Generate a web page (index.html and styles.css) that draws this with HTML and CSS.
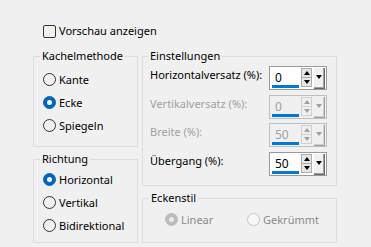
FILE: index.html
```html
<!DOCTYPE html>
<html lang="de">

<head>
    <meta charset="UTF-8">
    <title>Nahtloses Kacheln</title>
    <link rel="stylesheet" href="styles.css">
</head>

<body>
    <div class="dialog">
        <label class="check"><span class="box"></span>Vorschau anzeigen</label>

        <div class="columns">
            <div class="col">
                <fieldset class="group method">
                    <legend>Kachelmethode</legend>
                    <div class="radio"><span class="dot"></span>Kante</div>
                    <div class="radio"><span class="dot on"></span>Ecke</div>
                    <div class="radio"><span class="dot"></span>Spiegeln</div>
                </fieldset>

                <fieldset class="group direction">
                    <legend>Richtung</legend>
                    <div class="radio"><span class="dot on"></span>Horizontal</div>
                    <div class="radio"><span class="dot"></span>Vertikal</div>
                    <div class="radio"><span class="dot"></span>Bidirektional</div>
                </fieldset>
            </div>

            <div class="col">
                <fieldset class="group settings">
                    <legend>Einstellungen</legend>
                    <div class="rows">
                        <div class="row">
                            <span class="label">Horizontalversatz (%):</span>
                            <div class="spin">
                                <div class="field"><span class="value">0</span><span class="bar"></span></div>
                                <div class="arrows"><span class="up"></span><span class="down"></span></div>
                                <div class="drop"></div>
                            </div>
                        </div>
                        <div class="row off">
                            <span class="label">Vertikalversatz (%):</span>
                            <div class="spin">
                                <div class="field"><span class="value">0</span><span class="bar"></span></div>
                                <div class="arrows"><span class="up"></span><span class="down"></span></div>
                                <div class="drop"></div>
                            </div>
                        </div>
                        <div class="row off">
                            <span class="label">Breite (%):</span>
                            <div class="spin">
                                <div class="field"><span class="value">50</span><span class="bar"></span></div>
                                <div class="arrows"><span class="up"></span><span class="down"></span></div>
                                <div class="drop"></div>
                            </div>
                        </div>
                        <div class="row">
                            <span class="label">Übergang (%):</span>
                            <div class="spin">
                                <div class="field"><span class="value">50</span><span class="bar"></span></div>
                                <div class="arrows"><span class="up"></span><span class="down"></span></div>
                                <div class="drop"></div>
                            </div>
                        </div>
                    </div>
                </fieldset>

                <fieldset class="group corner">
                    <legend>Eckenstil</legend>
                    <div class="pair">
                        <div class="radio off"><span class="dot on"></span>Linear</div>
                        <div class="radio off"><span class="dot"></span>Gekrümmt</div>
                    </div>
                </fieldset>
            </div>
        </div>
    </div>
</body>

</html>
```

FILE: styles.css
```css
:root {
    --face: #f0f0f0;
    --group-border: #dcdcdc;
    --text: #000;
    --text-off: #a0a0a0;
    --accent: #0067c0;
    --bar: #0078d7;
}

html,
body {
    margin: 0;
    padding: 0;
    background: var(--face);
}

body {
    font-family: "Noto Sans", "Open Sans", sans-serif;
    font-size: 11px;
    line-height: 16px;
    color: var(--text);
}

.dialog {
    padding: 23px 0 0 33px;
}

.check {
    display: flex;
    align-items: center;
    height: 16px;
    padding-left: 10px;
}

.box {
    width: 13px;
    height: 13px;
    box-sizing: border-box;
    border: 1px solid #333;
    border-radius: 2px;
    margin-right: 3px;
}

.columns {
    display: flex;
    gap: 4px;
    margin-top: 9px;
}

.col {
    display: flex;
    flex-direction: column;
    gap: 4px;
}

/* group boxes */

.group {
    margin: 0;
    padding: 0;
    border: 1px solid var(--group-border);
    box-sizing: border-box;
    min-width: 0;
}

.group legend {
    padding: 0 2px;
    margin-left: 6px;
    line-height: 16px;
}

.method,
.direction {
    width: 105px;
}

.method {
    height: 99px;
    padding-top: 4px;
}

.direction {
    height: 92px;
    padding-top: 1px;
}

.settings,
.corner {
    width: 195px;
}

.settings {
    height: 138px;
}

.settings legend {
    margin-left: 5px;
}

.rows {
    padding: 2px 9px 0 7px;
}

.corner {
    height: 53px;
}

/* radios */

.radio {
    display: flex;
    align-items: center;
    height: 23px;
    padding-left: 9px;
    white-space: nowrap;
}

.dot {
    flex: none;
    width: 13px;
    height: 13px;
    box-sizing: border-box;
    border: 1px solid #333;
    border-radius: 50%;
    margin-right: 3px;
    display: flex;
    align-items: center;
    justify-content: center;
}

.dot.on {
    background: var(--accent);
    border-color: var(--accent);
}

.dot.on::after {
    content: "";
    width: 5px;
    height: 5px;
    border-radius: 50%;
    background: #fff;
}

.pair {
    display: flex;
    padding: 2px 0 0 22px;
}

.pair .radio {
    padding-left: 0;
    width: 82px;
    color: #8a8a8a;
}

.radio.off .dot {
    border-color: #c4c4c4;
    background: #f7f7f7;
}

.radio.off .dot.on {
    background: #bcbcbc;
    border-color: #bcbcbc;
}

.radio.off .dot.on::after {
    background: #ececec;
}

/* spin rows */

.row {
    display: flex;
    justify-content: space-between;
    height: 28.67px;
}

.label {
    padding-top: 1px;
    white-space: nowrap;
}

.row.off .label {
    color: var(--text-off);
}

.spin {
    flex: none;
    display: flex;
    gap: 2px;
    width: 58px;
    height: 24px;
    box-sizing: border-box;
    border: 1px solid #9a9a9a;
    padding: 0 1px 0 0;
    background: #fff;
}

.field {
    width: 28px;
    display: flex;
    flex-direction: column;
    padding-left: 1px;
}

.value {
    padding: 4px 0 0 4px;
    line-height: 14px;
    font-size: 12px;
    flex: 1;
}

.bar {
    height: 3px;
    margin: 0 0 1px 1px;
    background: var(--bar);
}

.arrows {
    display: flex;
    flex-direction: column;
    width: 11px;
    padding-top: 1px;
}

.arrows span {
    height: 10px;
    box-sizing: border-box;
    border: 1px solid #adadad;
    background: #e5e5e5;
    display: flex;
    align-items: center;
    justify-content: center;
}

.arrows span + span {
    margin-top: -1px;
}

.arrows .up::after,
.arrows .down::after,
.drop::after {
    content: "";
    width: 0;
    height: 0;
    border-left: 3px solid transparent;
    border-right: 3px solid transparent;
}

.arrows .up::after {
    border-bottom: 4px solid #000;
}

.arrows .down::after,
.drop::after {
    border-top: 4px solid #000;
}

.drop {
    width: 11px;
    height: 21px;
    margin-top: 1px;
    box-sizing: border-box;
    background: #f0f0f0;
    border-right: 1px solid #696969;
    border-bottom: 1px solid #696969;
    box-shadow: inset -1px -1px 0 #a0a0a0;
    display: flex;
    justify-content: center;
    padding-top: 7px;
}

.row.off .spin {
    border-color: #bfbfbf;
    background: #f0f0f0;
}

.row.off .value {
    color: var(--text-off);
}

.row.off .arrows span {
    border-color: #cfcfcf;
    background: #f0f0f0;
}

.row.off .arrows .up::after {
    border-bottom-color: #a0a0a0;
}

.row.off .arrows .down::after,
.row.off .drop::after {
    border-top-color: #a0a0a0;
}

.row.off .drop {
    border-color: #a0a0a0;
    box-shadow: inset -1px -1px 0 #cfcfcf;
}
```
